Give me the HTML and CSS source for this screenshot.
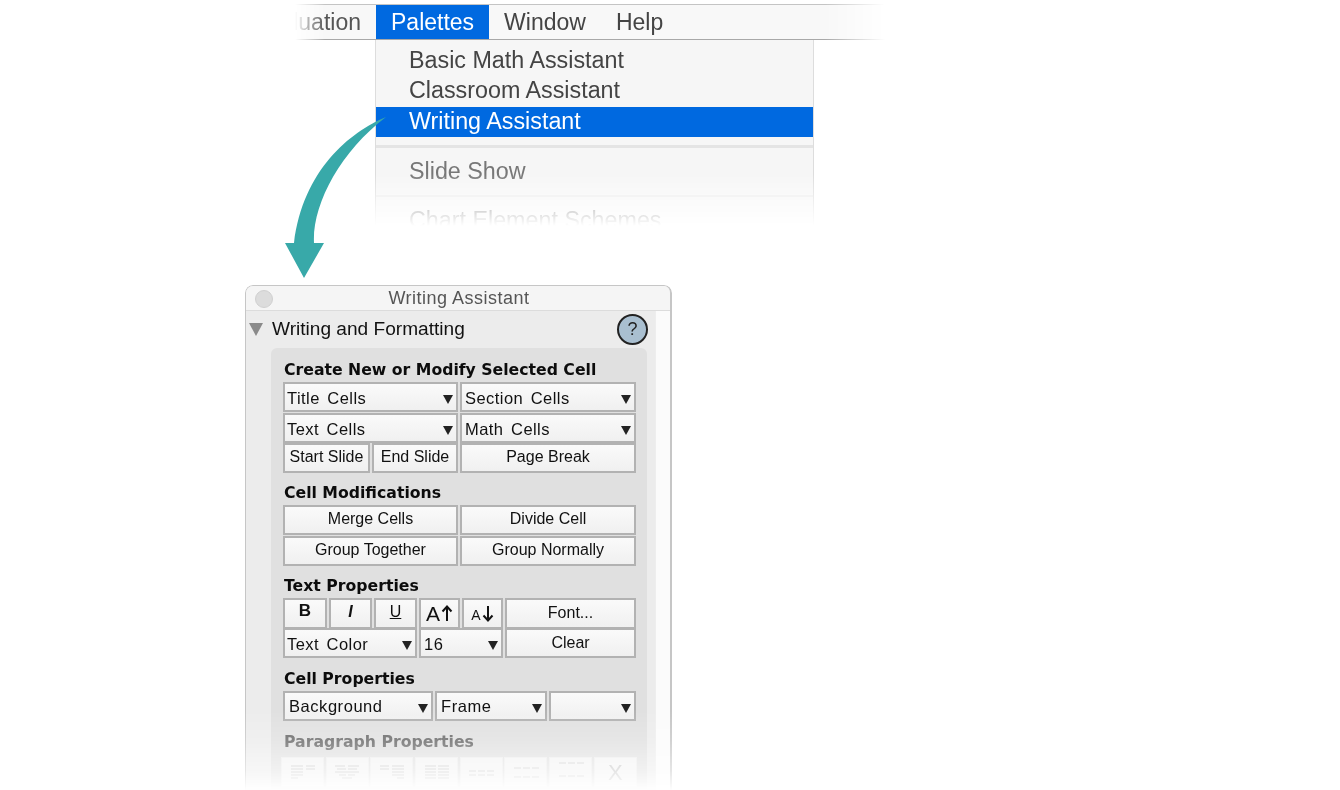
FILE: index.html
```html
<!DOCTYPE html>
<html lang="en">
<head>
<meta charset="utf-8">
<title>Writing Assistant</title>
<link rel="stylesheet" href="styles.css">
</head>
<body>
<div class="canvas">
  <div class="menubar">
    <div class="mb-clip"><span>Evaluation</span></div>
    <div class="mb-item mb-active">Palettes</div>
    <div class="mb-item">Window</div>
    <div class="mb-item">Help</div>
  </div>
  <div class="menu">
    <div class="mi mi-first">Basic Math Assistant</div>
    <div class="mi">Classroom Assistant</div>
    <div class="mi mi-active">Writing Assistant</div>
    <div class="msep"></div>
    <div class="mi mi-dim">Slide Show</div>
    <div class="msep msep2"></div>
    <div class="mi mi-dim">Chart Element Schemes</div>
  </div>

  <div class="palette">
    <div class="titlebar"><span class="dot"></span><span class="ttl">Writing Assistant</span></div>
    <div class="pbody">
      <div class="pmain">
        <div class="phead">
          <span class="tri"></span>
          <span class="phtext">Writing and Formatting</span>
          <span class="help">?</span>
        </div>
        <div class="panel">
          <div class="h h1">Create New or Modify Selected Cell</div>
          <div class="row r-2">
            <div class="btn dd"><span>Title Cells</span><i></i></div>
            <div class="btn dd"><span>Section Cells</span><i></i></div>
          </div>
          <div class="row r-2">
            <div class="btn dd"><span>Text Cells</span><i></i></div>
            <div class="btn dd"><span>Math Cells</span><i></i></div>
          </div>
          <div class="row r-3">
            <div class="btn">Start Slide</div>
            <div class="btn">End Slide</div>
            <div class="btn">Page Break</div>
          </div>
          <div class="h h2">Cell Modifications</div>
          <div class="row r-2">
            <div class="btn">Merge Cells</div>
            <div class="btn">Divide Cell</div>
          </div>
          <div class="row r-2">
            <div class="btn">Group Together</div>
            <div class="btn">Group Normally</div>
          </div>
          <div class="h h2">Text Properties</div>
          <div class="row r-6">
            <div class="btn fb">B</div>
            <div class="btn fi">I</div>
            <div class="btn fu">U</div>
            <div class="btn fa"><span class="abig">A</span><svg class="arr" width="12" height="18" viewBox="0 0 12 18"><path d="M6 16V2M1.500 6.500L6 1.500l4.500 5" fill="none" stroke="#111" stroke-width="2"/></svg></div>
            <div class="btn fa"><span class="asm">A</span><svg class="arr" width="12" height="18" viewBox="0 0 12 18"><path d="M6 1v14M1.500 10.500L6 15.500l4.500-5" fill="none" stroke="#111" stroke-width="2"/></svg></div>
            <div class="btn bl">Font...</div>
          </div>
          <div class="row r-3b">
            <div class="btn dd"><span>Text Color</span><i></i></div>
            <div class="btn dd"><span>16</span><i></i></div>
            <div class="btn bl">Clear</div>
          </div>
          <div class="h h2">Cell Properties</div>
          <div class="row r-3c">
            <div class="btn dd dd-w"><span>Background</span><i></i></div>
            <div class="btn dd dd-w"><span>Frame</span><i></i></div>
            <div class="btn dd"><span></span><i></i></div>
          </div>
          <div class="h h2 h-dim">Paragraph Properties</div>
          <div class="row r-8">
            <div class="btn off"><svg width="26" height="14" viewBox="0 0 26 14"><path d="M1 1h12M16 1h9M1 4h12M16 4h9M1 7h12M1 10h12M1 13h7" stroke="#c4c4c4" fill="none"/></svg></div>
            <div class="btn off"><svg width="26" height="14" viewBox="0 0 26 14"><path d="M1 1h10M14 1h11M3 4h9M14 4h9M1 7h24M5 10h7M14 10h7M8 13h10" stroke="#c4c4c4" fill="none"/></svg></div>
            <div class="btn off"><svg width="26" height="14" viewBox="0 0 26 14"><path d="M1 1h9M13 1h12M1 4h9M13 4h12M13 7h12M13 10h12M18 13h7" stroke="#c4c4c4" fill="none"/></svg></div>
            <div class="btn off"><svg width="26" height="14" viewBox="0 0 26 14"><path d="M1 1h11M14 1h11M1 4h11M14 4h11M1 7h11M14 7h11M1 10h11M14 10h11M1 13h11M14 13h11" stroke="#c4c4c4" fill="none"/></svg></div>
            <div class="btn off"><svg width="26" height="14" viewBox="0 0 26 14"><path d="M1 6h7M10 6h7M19 6h7M1 10h7M10 10h7M19 10h7" stroke="#c8c8c8" fill="none"/></svg></div>
            <div class="btn off"><svg width="26" height="14" viewBox="0 0 26 14"><path d="M1 3h7M10 3h7M19 3h7M1 12h7M10 12h7M19 12h7" stroke="#c8c8c8" fill="none"/></svg></div>
            <div class="btn off"><svg width="26" height="20" viewBox="0 0 26 20"><path d="M1 1h7M10 1h7M19 1h7M1 14h7M10 14h7M19 14h7" stroke="#c8c8c8" fill="none"/></svg></div>
            <div class="btn off offx">X</div>
          </div>
        </div>
      </div>
      <div class="pscroll"></div>
    </div>
  </div>

  <svg class="arrow" viewBox="280 112 110 170"><path d="M386 117C350 132 303 170 294 243L285 243L304 278L324 243L314 243C312 205 340 152 386 117Z" fill="#38a9a9"/></svg>
</div>
</body>
</html>
```
FILE: styles.css
```css
html, body { margin: 0; padding: 0; background: #fff; }
.canvas {
  position: relative;
  width: 1340px;
  height: 790px;
  overflow: hidden;
  padding-top: 4px;
  box-sizing: border-box;
  font-family: "Liberation Sans", Arial, sans-serif;
}
.menubar {
  display: flex;
  margin-left: 295px;
  width: 590px;
  height: 36px;
  box-sizing: border-box;
  background: #f8f8f8;
  border-top: 1px solid #c4c4c4;
  border-bottom: 1px solid #a8a8a8;
  font-size: 23px;
  color: #444;
  -webkit-mask-image: linear-gradient(to right, transparent 0, #000 30px, #000 530px, transparent 590px);
  mask-image: linear-gradient(to right, transparent 0, #000 30px, #000 530px, transparent 590px);
}
.mb-clip {
  width: 81px;
  display: flex;
  justify-content: flex-end;
  overflow: hidden;
  padding-right: 15px;
  box-sizing: border-box;
  line-height: 34px;
  white-space: nowrap;
  flex: none;
  color: #555;
}
.mb-item { line-height: 34px; padding: 0 15px; }
.mb-active { background: #0069e0; color: #fff; }
.menu {
  margin-left: 375px;
  width: 439px;
  height: 186px;
  overflow: hidden;
  box-sizing: border-box;
  background: #f6f6f6;
  border-left: 1px solid #ddd;
  border-right: 1px solid #ddd;
  padding-top: 5px;
  font-size: 23.300px;
  color: #444;
  -webkit-mask-image: linear-gradient(to bottom, #000 72%, transparent 100%);
  mask-image: linear-gradient(to bottom, #000 72%, transparent 100%);
}
.mi { height: 31px; line-height: 28px; padding-left: 33px; white-space: nowrap; }
.mi-first { line-height: 30px; }
.mi-active { background: #0069e0; color: #fff; height: 30px; }
.mi-dim { color: #777; height: 30px; line-height: 30px; }
.msep { height: 3px; margin: 8px 0; background: #e4e4e4; }
.msep2 { margin: 9px 0 8px; height: 2px; background: #ececec; }

.palette {
  margin: 59px 0 0 245px;
  width: 427px;
  height: 506px;
  box-sizing: border-box;
  border: 1px solid #c6c6c6;
  border-right: 2px solid #c6c6c6;
  border-radius: 8px 8px 0 0;
  overflow: hidden;
  background: #ececec;
  -webkit-mask-image: linear-gradient(to bottom, #000 84%, rgba(0,0,0,.8) 90%, rgba(0,0,0,.45) 96%, transparent 100%);
  mask-image: linear-gradient(to bottom, #000 84%, rgba(0,0,0,.8) 90%, rgba(0,0,0,.45) 96%, transparent 100%);
}
.titlebar {
  display: flex;
  align-items: center;
  justify-content: center;
  position: relative;
  height: 24px;
  background: #f5f5f5;
  border-bottom: 1px solid #dcdcdc;
}
.dot {
  position: absolute;
  left: 9px;
  top: 4px;
  width: 18px;
  height: 18px;
  border-radius: 50%;
  background: #dcdcdc;
  border: 1px solid #d0d0d0;
  box-sizing: border-box;
}
.ttl { font-size: 18px; color: #555; letter-spacing: .5px; margin-left: 2px; }
.pbody { display: flex; }
.pmain { width: 409px; flex: none; background: #ececec; padding: 0 8px 0 25px; box-sizing: border-box; }
.pscroll { flex: 1; background: #fbfbfb; height: 500px; border-left: 1px solid #eee; }
.phead { display: flex; align-items: center; height: 36px; position: relative; }
.tri {
  position: absolute;
  left: -22px;
  top: 12px;
  width: 0;
  height: 0;
  border-left: 7px solid transparent;
  border-right: 7px solid transparent;
  border-top: 13px solid #8a8a8a;
}
.phtext { font-size: 19.100px; color: #111; margin: 0 0 0 1px; }
.help {
  position: absolute;
  right: -1px;
  top: 3px;
  width: 31px;
  height: 31px;
  box-sizing: border-box;
  border: 2px solid #222;
  border-radius: 50%;
  background: #a9bfd0;
  text-align: center;
  font-size: 18px;
  line-height: 27px;
  color: #222;
}
.panel {
  margin-top: 1px;
  width: 376px;
  height: 470px;
  box-sizing: border-box;
  background: #e0e0e0;
  border-radius: 6px;
  padding: 0 11px 0 12px;
}
.h {
  font-family: "DejaVu Sans", Verdana, sans-serif;
  font-weight: 700;
  font-size: 15.700px;
  color: #0c0c0c;
  padding-left: 1px;
  white-space: nowrap;
}
.h1 { height: 34px; line-height: 43px; }
.h2 { height: 32px; line-height: 39px; }
.h-dim { color: #666; height: 35px; line-height: 40px; }
.row { display: grid; gap: 2px; height: 30px; margin-bottom: 1px; }
.row + .row { margin-bottom: 0; }
.r-2 { grid-template-columns: 175px 176px; }
.r-3 { grid-template-columns: 87px 86px 176px; }
.r-6 { grid-template-columns: 44px 43px 43px 41px 41px 131px; margin-bottom: 0; }
.row.r-3b { grid-template-columns: 134px 84px 131px; margin-bottom: 1px; }
.r-3c { grid-template-columns: 150px 112px 87px; }
.r-8 { grid-template-columns: repeat(8, 43px); gap: 1.700px; margin-left: -2px; height: 30px; }
.btn {
  box-sizing: border-box;
  border: 2px solid #b2b2b2;
  background: linear-gradient(to bottom, #fafafa, #f0f0f0);
  font-size: 16px;
  color: #111;
  text-align: center;
  line-height: 23px;
  white-space: nowrap;
  min-width: 0;
}
.bl { line-height: 25px; }
.dd {
  display: flex;
  justify-content: space-between;
  align-items: center;
  text-align: left;
  padding: 0 3px 0 2px;
  font-size: 16.500px;
  letter-spacing: .45px;
  word-spacing: 2.500px;
}
.dd span { padding-top: 3px; }
.dd + .dd span { padding-left: 1px; }
.dd i {
  width: 0;
  height: 0;
  border-left: 5.500px solid transparent;
  border-right: 5.500px solid transparent;
  border-top: 9px solid #222;
  margin-top: 4px;
}
.dd-w { padding-left: 4px; letter-spacing: .55px; }
.dd-w span { padding-top: 0; }
.dd.dd-w + .dd-w span { padding-left: 0; }
.fb { font-weight: 700; font-size: 17px; line-height: 21px; }
.fi { font-style: italic; font-weight: 700; font-size: 16px; }
.fu { text-decoration: underline; font-size: 16px; }
.fa { display: flex; align-items: center; justify-content: center; gap: 1px; }
.abig { font-size: 21px; }
.asm { font-size: 14px; margin-top: 4px; }
.off { border-color: #ececec; border-width: 1px; background: #f3f3f3; display: flex; align-items: center; justify-content: center; }
.offx { font-size: 22px; color: #c4c4c4; }
.arrow { position: absolute; left: 280px; top: 112px; width: 110px; height: 170px; }
```
